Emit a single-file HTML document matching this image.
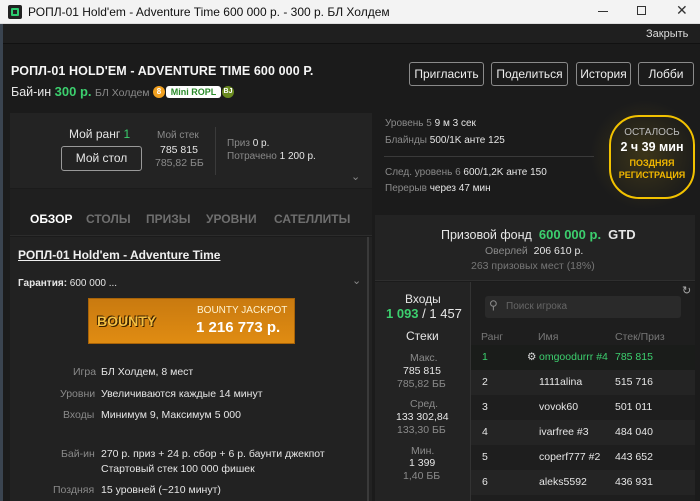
<!DOCTYPE html>
<html><head><meta charset="utf-8"><style>
*{margin:0;padding:0;box-sizing:border-box}
body{width:700px;height:501px;overflow:hidden;background:#1b1b1b;font-family:"Liberation Sans",Arial,sans-serif;color:#e6e6e6;position:relative;font-size:11px}
.a{position:absolute;white-space:nowrap}
.g{color:#8a8a8a}.gr{color:#3ccf6e}.w{color:#f0f0f0}
.btn{position:absolute;top:62px;height:24px;border:1px solid #8a8a8a;border-radius:3px;color:#eee;font-size:12px;text-align:center;line-height:22px}
.row{position:absolute;left:471px;width:224px;height:25px;font-size:10.5px;line-height:25px}
.row span{position:absolute}
.tab{position:absolute;top:212px;font-size:12px;font-weight:bold;color:#6f6f6f}
</style></head><body>
<div class="a" style="left:0;top:0;width:700px;height:24px;background:#f3f3f3;border-bottom:1px solid #ddd"></div>
<div class="a" style="left:8px;top:5px;width:14px;height:14px;background:#222;border-radius:2px"><div style="position:absolute;left:3px;top:3px;width:8px;height:8px;border:2px solid #2ecc71;border-radius:1px"></div></div>
<div class="a" style="left:28px;top:5px;color:#111;font-size:12px">РОПЛ-01 Hold'em - Adventure Time 600 000 р. - 300 р. БЛ Холдем</div>
<div class="a" style="left:598px;top:11px;width:10px;height:1px;background:#333"></div>
<div class="a" style="left:637px;top:6px;width:9px;height:9px;border:1px solid #333"></div>
<div class="a" style="left:676px;top:2px;color:#333;font-size:14px">✕</div>
<div class="a" style="left:0;top:24px;width:3px;height:477px;background:#3a4450"></div>
<div class="a" style="left:3px;top:24px;width:697px;height:20px;background:#1f1f1f;border-bottom:1px solid #111"></div>
<div class="a" style="left:646px;top:28px;font-size:11px;color:#ddd">Закрыть</div>

<div class="a" style="left:11px;top:64px;font-size:12.5px;font-weight:bold;color:#f5f5f5;letter-spacing:0.1px">РОПЛ-01 HOLD'EM - ADVENTURE TIME 600 000 Р.</div>
<div class="a" style="left:11px;top:84px;font-size:12.5px">Бай-ин <b class="gr" style="font-size:13px">300 р.</b> <span class="g" style="font-size:10.5px">БЛ Холдем</span></div>
<div class="a" style="left:153px;top:86px;width:12px;height:12px;border-radius:6px;background:#f0a020;color:#fff;font-size:8px;text-align:center;line-height:12px;font-weight:bold">8</div>
<div class="a" style="left:166px;top:86px;width:55px;height:12px;border-radius:3px;background:#fff;color:#2a8a2a;font-size:9px;font-weight:bold;text-align:center;line-height:12px">Mini ROPL</div>
<div class="a" style="left:222px;top:86px;width:12px;height:12px;border-radius:6px;background:#6a8a20;color:#fff;font-size:7px;text-align:center;line-height:12px;font-weight:bold">BJ</div>

<div class="btn" style="left:409px;width:75px">Пригласить</div>
<div class="btn" style="left:491px;width:77px">Поделиться</div>
<div class="btn" style="left:576px;width:55px">История</div>
<div class="btn" style="left:638px;width:56px">Лобби</div>

<div class="a" style="left:10px;top:113px;width:362px;height:75px;background:#232323"></div>
<div class="a" style="left:69px;top:127px;font-size:12px">Мой ранг <span class="gr">1</span></div>
<div class="a" style="left:61px;top:146px;width:81px;height:25px;border:1px solid #999;border-radius:3px;text-align:center;line-height:23px;font-size:12px">Мой стол</div>
<div class="a g" style="left:157px;top:130px;font-size:10px">Мой стек</div>
<div class="a" style="left:160px;top:144px;font-size:10.5px">785 815</div>
<div class="a g" style="left:155px;top:157px;font-size:10.5px">785,82 ББ</div>
<div class="a" style="left:215px;top:127px;width:1px;height:48px;background:#3a3a3a"></div>
<div class="a" style="left:227px;top:138px;font-size:10px"><span class="g">Приз</span> 0 р.</div>
<div class="a" style="left:227px;top:151px;font-size:10px"><span class="g">Потрачено</span> 1 200 р.</div>
<div class="a g" style="left:351px;top:170px;font-size:11px">⌄</div>

<div class="a" style="left:10px;top:189px;width:362px;height:47px;background:#1f1f1f;border-bottom:1px solid #2c2c2c"></div>
<div class="tab" style="left:30px;color:#fff">ОБЗОР</div>
<div class="tab" style="left:86px">СТОЛЫ</div>
<div class="tab" style="left:146px">ПРИЗЫ</div>
<div class="tab" style="left:206px">УРОВНИ</div>
<div class="tab" style="left:274px">САТЕЛЛИТЫ</div>

<div class="a" style="left:10px;top:237px;width:362px;height:264px;background:#222"></div>
<div class="a" style="left:367px;top:237px;width:2px;height:264px;background:#3a3a3a"></div>
<div class="a" style="left:18px;top:248px;font-size:12px;font-weight:bold;text-decoration:underline;color:#f0f0f0">РОПЛ-01 Hold'em - Adventure Time</div>
<div class="a" style="left:18px;top:278px;font-size:10px"><b>Гарантия:</b> 600 000 ...</div>
<div class="a g" style="left:352px;top:274px;font-size:11px">⌄</div>
<div class="a" style="left:88px;top:298px;width:207px;height:46px;background:linear-gradient(#c97a10,#e08c12);border:1px solid #a86308"></div>
<div class="a" style="left:97px;top:313px;font-size:14px;font-weight:bold;color:#f7c040;text-shadow:1px 1px 0 #3a2000,-1px -1px 0 #3a2000">BOUNTY</div>
<div class="a" style="left:197px;top:305px;font-size:10px;color:#fff3d0">BOUNTY JACKPOT</div>
<div class="a" style="left:196px;top:319px;font-size:15px;font-weight:bold;color:#fff">1 216 773 р.</div>

<div class="a g" style="left:73px;top:366px;font-size:10.5px">Игра</div><div class="a" style="left:101px;top:366px;font-size:10.5px">БЛ Холдем, 8 мест</div>
<div class="a g" style="left:60px;top:388px;font-size:10.5px">Уровни</div><div class="a" style="left:101px;top:388px;font-size:10.5px">Увеличиваются каждые 14 минут</div>
<div class="a g" style="left:63px;top:409px;font-size:10.5px">Входы</div><div class="a" style="left:101px;top:409px;font-size:10.5px">Минимум 9, Максимум 5 000</div>
<div class="a g" style="left:61px;top:448px;font-size:10.5px">Бай-ин</div><div class="a" style="left:101px;top:448px;font-size:10.5px">270 р. приз + 24 р. сбор + 6 р. баунти джекпот</div>
<div class="a" style="left:101px;top:463px;font-size:10.5px">Стартовый стек 100 000 фишек</div>
<div class="a g" style="left:53px;top:484px;font-size:10.5px">Поздняя</div><div class="a" style="left:101px;top:484px;font-size:10.5px">15 уровней (~210 минут)</div>

<div class="a" style="left:385px;top:118px;font-size:10px"><span class="g">Уровень 5</span> 9 м 3 сек</div>
<div class="a" style="left:385px;top:135px;font-size:10px"><span class="g">Блайнды</span> 500/1K анте 125</div>
<div class="a" style="left:384px;top:156px;width:210px;height:1px;background:#3a3a3a"></div>
<div class="a" style="left:385px;top:167px;font-size:10px"><span class="g">След. уровень 6</span> 600/1,2K анте 150</div>
<div class="a" style="left:385px;top:183px;font-size:10px"><span class="g">Перерыв</span> через 47 мин</div>
<div class="a" style="left:590px;top:100px;width:110px;height:110px;background:radial-gradient(circle,rgba(120,100,20,.35),rgba(0,0,0,0) 70%)"></div>
<div class="a" style="left:609px;top:115px;width:86px;height:84px;border:2px solid #f2c200;border-radius:30px;text-align:center">
<div style="margin-top:10px;font-size:10px;color:#bbb">ОСТАЛОСЬ</div>
<div style="margin-top:2px;font-size:12.5px;font-weight:bold;color:#fff">2 ч 39 мин</div>
<div style="margin-top:3px;font-size:9px;font-weight:bold;color:#f2b800;line-height:12px">ПОЗДНЯЯ<br>РЕГИСТРАЦИЯ</div></div>

<div class="a" style="left:375px;top:215px;width:320px;height:66px;background:#232323;border-bottom:1px solid #2e2e2e"></div>
<div class="a" style="left:441px;top:227px;font-size:12.5px">Призовой фонд <b class="gr" style="font-size:13px">&nbsp;600 000 р.</b> <b style="font-size:13px">&nbsp;GTD</b></div>
<div class="a" style="left:485px;top:245px;font-size:10.5px"><span class="g">Оверлей</span>&nbsp; 206 610 р.</div>
<div class="a g" style="left:471px;top:260px;font-size:10.5px;color:#777">263 призовых мест (18%)</div>

<div class="a" style="left:375px;top:282px;width:95px;height:219px;background:#232323"></div>
<div class="a" style="left:470px;top:282px;width:1px;height:219px;background:#333"></div>
<div class="a" style="left:471px;top:282px;width:224px;height:219px;background:#1e1e1e"></div>
<div class="a" style="left:405px;top:292px;font-size:12px">Входы</div>
<div class="a" style="left:386px;top:306px;font-size:13px"><b class="gr">1 093</b> / 1 457</div>
<div class="a" style="left:406px;top:329px;font-size:12px">Стеки</div>
<div class="a g" style="left:410px;top:352px;font-size:10.5px">Макс.</div>
<div class="a" style="left:403px;top:365px;font-size:10.5px">785 815</div>
<div class="a g" style="left:397px;top:378px;font-size:10.5px">785,82 ББ</div>
<div class="a g" style="left:410px;top:398px;font-size:10.5px">Сред.</div>
<div class="a" style="left:396px;top:411px;font-size:10.5px">133 302,84</div>
<div class="a g" style="left:397px;top:424px;font-size:10.5px">133,30 ББ</div>
<div class="a g" style="left:411px;top:445px;font-size:10.5px">Мин.</div>
<div class="a" style="left:409px;top:457px;font-size:10.5px">1 399</div>
<div class="a g" style="left:403px;top:470px;font-size:10.5px">1,40 ББ</div>

<div class="a" style="left:682px;top:284px;color:#aaa;font-size:11px">↻</div>
<div class="a" style="left:485px;top:296px;width:196px;height:22px;background:#2a2a2a;border-radius:3px"></div>
<div class="a" style="left:489px;top:298px;color:#888;font-size:12px">⚲</div>
<div class="a" style="left:506px;top:301px;color:#666;font-size:10px">Поиск игрока</div>
<div class="a g" style="left:481px;top:331px;font-size:10.5px;color:#777">Ранг</div>
<div class="a g" style="left:538px;top:331px;font-size:10.5px;color:#777">Имя</div>
<div class="a g" style="left:615px;top:331px;font-size:10.5px;color:#777">Стек/Приз</div>

<div class="row gr" style="top:345px;background:#1a1c1a"><span style="left:11px">1</span><span style="left:56px;color:#ddd">⚙</span><span style="left:68px">omgoodurrr #4</span><span style="left:144px">785 815</span></div>
<div class="row" style="top:370px;background:#242424"><span style="left:11px">2</span><span style="left:68px">1111alina</span><span style="left:144px">515 716</span></div>
<div class="row" style="top:395px"><span style="left:11px">3</span><span style="left:68px">vovok60</span><span style="left:144px">501 011</span></div>
<div class="row" style="top:420px;background:#242424"><span style="left:11px">4</span><span style="left:68px">ivarfree #3</span><span style="left:144px">484 040</span></div>
<div class="row" style="top:445px"><span style="left:11px">5</span><span style="left:68px">coperf777 #2</span><span style="left:144px">443 652</span></div>
<div class="row" style="top:470px;background:#242424"><span style="left:11px">6</span><span style="left:68px">aleks5592</span><span style="left:144px">436 931</span></div>
</body></html>
